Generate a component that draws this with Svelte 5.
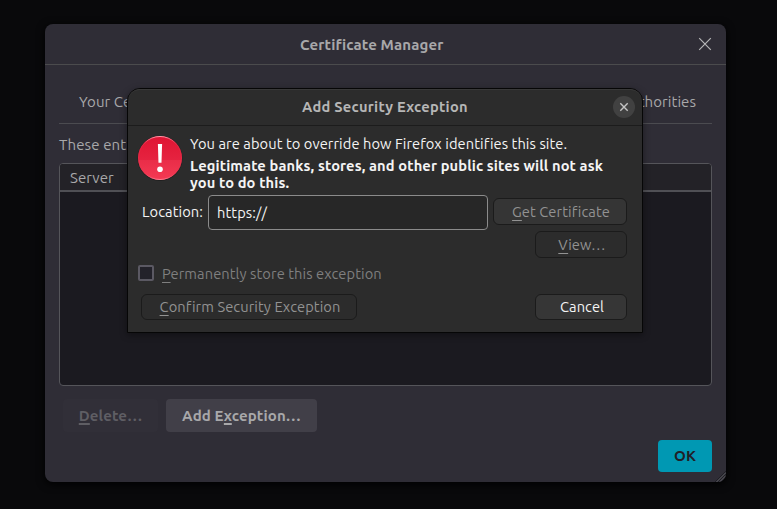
<script>
  let location = $state('https://');
</script>

<div class="screen">
  <section class="manager">
    <header class="manager-head">
      <h1>Certificate Manager</h1>
      <svg class="close" width="14" height="14" viewBox="0 0 14 14"><path d="M1.2 1.2 12.8 12.8M12.8 1.2 1.2 12.8" /></svg>
    </header>
    <div class="manager-body">
      <nav class="tabs">
        <span class="tab-first">Your Certificates</span>
        <span class="tab-last">Authorities</span>
      </nav>
      <p class="intro">These entries</p>
      <div class="table">
        <div class="table-head">Server</div>
      </div>
      <div class="actions">
        <div class="btn delete"><span><u>D</u>elete…</span></div>
        <div class="btn add"><span>Add E<u>x</u>ception…</span></div>
      </div>
      <footer><div class="btn ok"><span>OK</span></div></footer>
    </div>
    <svg class="grip" width="11" height="11" viewBox="0 0 11 11">
      <path class="dark" d="M0 11 11 0M3 11 11 3M6 11 11 6M9 11 11 9" />
      <path class="light" d="M1.5 11 11 1.5M4.5 11 11 4.5M7.5 11 11 7.5" />
    </svg>
  </section>

  <section class="dialog">
    <header class="dialog-head">
      <h2>Add Security Exception</h2>
      <div class="round">
        <svg width="10" height="10" viewBox="0 0 10 10"><path d="M1.3 1.3 8.7 8.7M8.7 1.3 1.3 8.7" /></svg>
      </div>
    </header>
    <div class="warning">
      <svg class="alert" width="46" height="46" viewBox="0 0 46 46">
        <defs>
          <linearGradient id="top" x1="0" y1="0" x2="0" y2="1">
            <stop offset="0" stop-color="#df1433" />
            <stop offset=".55" stop-color="#e62340" />
            <stop offset=".55" stop-color="#e92d48" />
            <stop offset="1" stop-color="#f53a54" />
          </linearGradient>
          <linearGradient id="rim" x1="0" y1="0" x2="0" y2="1">
            <stop offset="0" stop-color="#ff9bab" />
            <stop offset=".2" stop-color="#e83551" stop-opacity=".4" />
            <stop offset=".85" stop-color="#e83551" stop-opacity=".4" />
            <stop offset="1" stop-color="#ff7d90" />
          </linearGradient>
        </defs>
        <circle cx="23" cy="23.4" r="22.5" fill="#202020" />
        <circle cx="23" cy="23" r="22" fill="url(#top)" />
        <circle cx="23" cy="23" r="21.5" fill="none" stroke="url(#rim)" />
        <path d="M20.9 9h4.2l-.6 18.7h-3z" fill="#fff" />
        <circle cx="23" cy="34.3" r="2.8" fill="#fff" />
      </svg>
      <div class="message">
        <p class="m1">You are about to override how Firefox identifies this site.</p>
        <p class="m2">Legitimate banks, stores, and other public sites will not ask</p>
        <p class="m3">you to do this.</p>
      </div>
    </div>
    <div class="location">
      <span class="label">Location:</span>
      <input bind:value={location} />
      <div class="gbtn get"><span><u>G</u>et Certificate</span></div>
    </div>
    <div class="view-row"><div class="gbtn view"><span><u>V</u>iew…</span></div></div>
    <div class="store">
      <i class="check"></i>
      <span class="store-text"><u>P</u>ermanently store this exception</span>
    </div>
    <div class="bottom">
      <div class="gbtn confirm"><span><u>C</u>onfirm Security Exception</span></div>
      <div class="gbtn cancel"><span>Cancel</span></div>
    </div>
  </section>
</div>

<style>
  :global(body) { background: #09090b; }
  * { box-sizing: border-box; }
  .screen {
    position: relative;
    width: 777px;
    height: 509px;
    padding: 24px 0 0 45px;
    overflow: hidden;
    background: #09090b;
    font: 14.667px/20px Ubuntu, "Noto Sans", sans-serif;
    letter-spacing: .08px;
    color: #a8a8aa;
    white-space: nowrap;
  }
  h1, h2, p { margin: 0; }
  h1, h2 { font-size: inherit; font-weight: 700; line-height: 20px; }
  u { text-decoration-thickness: 1px; text-underline-offset: 3px; text-decoration-skip-ink: none; }
  .manager {
    position: relative;
    width: 681px;
    height: 458px;
    border-radius: 8px;
    background: #2f2d36;
    box-shadow: 0 2px 8px #000;
    overflow: hidden;
    font-size: 15px;
    letter-spacing: .05px;
  }
  .manager-head {
    display: flex;
    align-items: center;
    height: 41px;
    padding: 0 14px 0 255px;
    border-bottom: 1px solid #4b4b4d;
  }
  h1 { flex: 1; padding-top: 2px; letter-spacing: .12px; }
  .close path { stroke: #b5b5b7; stroke-width: 1.2; fill: none; }
  .manager-body { padding: 0 14px; }
  .tabs {
    display: flex;
    justify-content: space-between;
    height: 59px;
    padding: 27px 16px 0 20px;
    border-bottom: 1px solid #4b4b50;
  }
  .intro { height: 39px; padding-top: 11px; letter-spacing: .12px; }
  .table {
    height: 223px;
    border: 1px solid #55555a;
    border-radius: 4px;
    background: #1b1a20;
    overflow: hidden;
  }
  .table-head {
    height: 28px;
    padding: 4px 0 0 10px;
    background: #232227;
    border-bottom: 2px solid #505055;
  }
  .actions { display: flex; gap: 8px; padding: 13px 0 0 4px; }
  .btn {
    display: flex;
    align-items: center;
    justify-content: center;
    height: 33px;
    border-radius: 4px;
    font-weight: 700;
    letter-spacing: .12px;
  }
  .btn u { text-decoration-thickness: 2px; text-underline-offset: 2px; }
  .delete { width: 95px; background: #312f38; color: #5f5e64; }
  .add { width: 151px; background: #413f48; }
  footer { display: flex; justify-content: flex-end; padding-top: 8px; }
  .ok { width: 54px; height: 32px; background: #0098b3; color: #202027; }
  .grip { position: absolute; right: 0; bottom: 0; }
  .grip path { fill: none; stroke-width: .8; }
  .grip .dark { stroke: #1b1a20; }
  .grip .light { stroke: #66656b; }

  .dialog {
    position: absolute;
    left: 127px;
    top: 88px;
    width: 516px;
    height: 245px;
    border: 1px solid #060606;
    border-radius: 13px 13px 0 0;
    background: #2c2c2c;
    box-shadow: 0 2px 7px rgba(0, 0, 0, .4);
    color: #f4f4f4;
  }
  .dialog-head {
    display: flex;
    align-items: center;
    height: 37px;
    padding: 0 7px 0 174px;
    border-top: 1px solid #393939;
    border-bottom: 1px solid #1c1c1c;
    border-radius: 12px 12px 0 0;
    color: #b6b6b6;
  }
  h2 { flex: 1; padding-bottom: 2px; letter-spacing: .26px; }
  .round {
    display: flex;
    align-items: center;
    justify-content: center;
    width: 22px;
    height: 22px;
    margin-bottom: 1px;
    border-radius: 50%;
    background: #414141;
  }
  .round path { stroke: #c4c4c4; stroke-width: 1.4; fill: none; }
  .warning { display: flex; gap: 7px; height: 69px; padding: 9px 0 0 9px; }
  .message p { line-height: 17px; }
  .message .m1 { margin-bottom: 5px; }
  .m2, .m3 { font-weight: 700; letter-spacing: .12px; }
  .location { display: flex; align-items: center; height: 35px; padding-left: 14px; }
  .label { width: 66px; padding-bottom: 2px; }
  input {
    width: 280px;
    height: 35px;
    margin-right: 5px;
    padding: 0 8px;
    border: 1px solid #8b8b8b;
    border-radius: 4px;
    background: #272727;
    color: #f4f4f4;
    font: inherit;
    letter-spacing: inherit;
    outline: 0;
  }
  .gbtn {
    display: flex;
    align-items: center;
    justify-content: center;
    height: 27px;
    padding-left: 2px;
    border: 1px solid #1b1b1b;
    border-radius: 6px;
    background: #2c2c2c;
    color: #929292;
  }
  .get { width: 134px; margin-bottom: 2px; background: #353535; }
  .view-row { display: flex; justify-content: flex-end; padding: 1px 15px 0 0; }
  .view { width: 92px; }
  .store { display: flex; align-items: center; gap: 8px; height: 30px; padding-left: 10px; color: #7f7f7f; }
  .store-text { padding-top: 2px; }
  .check { width: 16px; height: 16px; border: 2px solid #5b5963; border-radius: 2px; background: #23222a; }
  .bottom { display: flex; justify-content: space-between; padding: 6px 15px 0 13px; }
  .bottom .gbtn { height: 26px; }
  .confirm { width: 216px; }
  .cancel { width: 92px; background: #363636; color: #f4f4f4; }
</style>
